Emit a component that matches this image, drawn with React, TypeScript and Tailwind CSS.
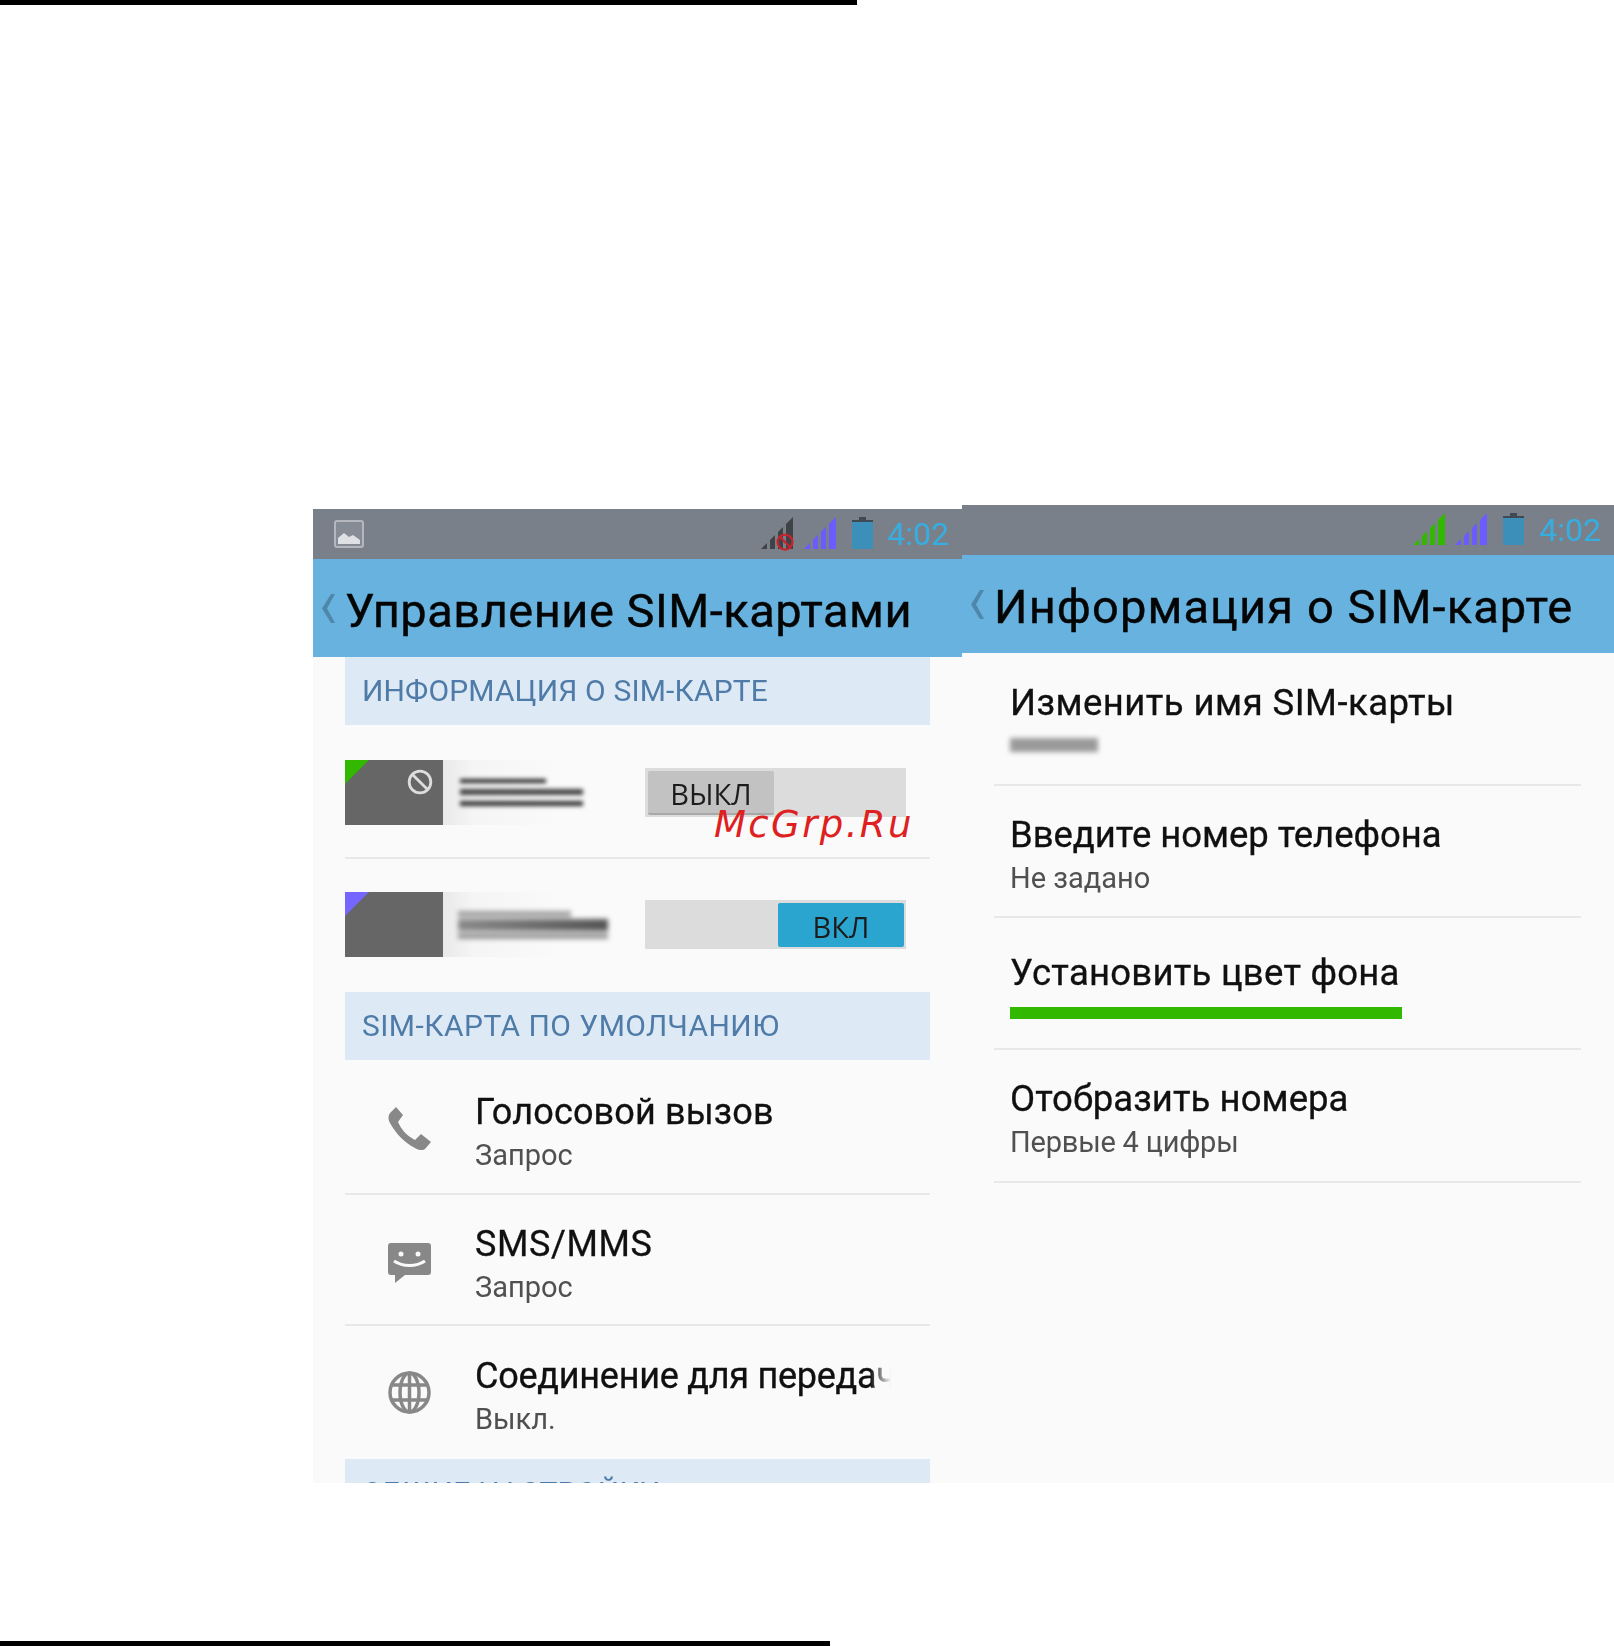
import React from 'react'

function Signal({ color, className }: { color: string; className: string }) {
  return (
    <svg viewBox="0 0 32 32" className={className} fill={color}>
      <polygon points="0,32 6,26 6,32" />
      <polygon points="9,23 14,18 14,32 9,32" />
      <polygon points="17,15 22,10 22,32 17,32" />
      <polygon points="25,7 32,0 32,32 25,32" />
    </svg>
  )
}

function Battery() {
  return (
    <svg viewBox="0 0 21 32" className="w-[21px] h-[32px]" fill="#3b8fb8">
      <path d="M7 0h7v3h7v29H0V3h7z" />
      <path d="M7 0h7v3h7v2H0V3h7z" fill="#3f4a55" />
    </svg>
  )
}

function NoSign({ className, color, width }: { className: string; color: string; width: number }) {
  return (
    <svg viewBox="0 0 24 24" className={className} fill="none" stroke={color} strokeWidth={width}>
      <circle cx="12" cy="12" r="10" />
      <path d="M5 5l14 14" />
    </svg>
  )
}

function Chevron() {
  return (
    <svg viewBox="0 0 13 29" className="w-[13px] h-[29px] shrink-0 blur-[0.6px]" fill="#4f87ab">
      <polygon points="9,0 13,0 5,14.5 13,29 9,29 0,14.5" />
    </svg>
  )
}

function StatusBar({ children }: { children?: React.ReactNode }) {
  return (
    <div className="h-[50px] bg-[#79808a] flex items-center pl-[21px] pr-[13px]">
      {children}
    </div>
  )
}

function ActionBar({ title, spacing }: { title: string; spacing: string }) {
  return (
    <div className="h-[98px] bg-[#67b2de] flex items-center pl-[9px] gap-[10px]">
      <Chevron />
      <span className={`text-[47px] leading-none mt-[4px] text-[#050505] whitespace-nowrap blur-[0.6px] [-webkit-text-stroke:0.4px_#050505] ${spacing}`}>{title}</span>
    </div>
  )
}

function SectionHeader({ label, spacing }: { label: string; spacing: string }) {
  return (
    <div className="h-[68px] bg-[#dde9f5] flex items-start pl-[17px] pt-[16px]">
      <span className={`text-[30px] leading-[36px] text-[#4f7ba8] whitespace-nowrap blur-[0.5px] ${spacing}`}>{label}</span>
    </div>
  )
}

function PhoneIcon() {
  return (
    <svg viewBox="0 0 43 43" className="w-[43px] h-[43px] blur-[0.5px]" fill="#888888">
      <path d="M8 0 15 8 10 15C13 22 19 29 27 33L33 27 43 35 37 42C34 44 30 43 27 41 17 36 8 27 2 16 0 12 0 9 2 6z" />
    </svg>
  )
}

function SmsIcon() {
  return (
    <svg viewBox="0 0 43 40" className="w-[43px] h-[40px] blur-[0.5px]">
      <path d="M3 0h37a3 3 0 0 1 3 3v26a3 3 0 0 1-3 3H17l-10 8v-8H3a3 3 0 0 1-3-3V3a3 3 0 0 1 3-3z" fill="#888888" />
      <circle cx="13" cy="11" r="2.5" fill="#fafafa" />
      <circle cx="30" cy="11" r="2.5" fill="#fafafa" />
      <path d="M6 18c9 6 22 6 31 0" fill="none" stroke="#fafafa" strokeWidth="3" />
    </svg>
  )
}

function GlobeIcon() {
  return (
    <svg viewBox="0 0 43 43" className="w-[43px] h-[43px] blur-[0.6px]" fill="none" stroke="#888888" strokeWidth="3.5">
      <circle cx="21.5" cy="21.5" r="19.5" />
      <ellipse cx="21.5" cy="21.5" rx="9.5" ry="19.5" />
      <path d="M21.5 2v39M4 14h35M4 29h35" />
    </svg>
  )
}

function SimRow({ corner, blocked, name, on, rowClass }: { corner: string; blocked?: boolean; name: React.ReactNode; on?: boolean; rowClass: string }) {
  return (
    <div className={`flex items-center pr-[24px] ${rowClass}`}>
      <div className="relative w-[98px] h-[65px] bg-[#666666] shrink-0">
        <svg viewBox="0 0 24 24" className="absolute left-0 top-0 w-[24px] h-[24px]" fill={corner}>
          <polygon points="0,0 24,0 0,24" />
        </svg>
        {blocked && <NoSign className="absolute left-[62px] top-[9px] w-[26px] h-[26px] blur-[0.3px]" color="#dddddd" width={2.6} />}
      </div>
      <div className="w-[202px] h-[65px] flex items-center bg-gradient-to-r from-[#e9e9e9] via-[#f5f5f5] via-15% to-transparent to-60% shrink-0">
        {name}
      </div>
      <div className={`w-[261px] h-[49px] bg-[#dcdcdc] flex items-center ${on ? 'justify-end pr-[2px]' : 'justify-start pl-[3px]'}`}>
        <div className={`w-[126px] h-[44px] rounded-[2px] flex items-center justify-center pt-[4px] font-['Open_Sans',sans-serif] text-[29px] text-[#1c1c1c] blur-[0.4px] ${on ? 'bg-[#2aa5d0]' : 'bg-[#c2c2c2] border-b-2 border-[#a8a8a8]'}`}>
          {on ? 'ВКЛ' : 'ВЫКЛ'}
        </div>
      </div>
    </div>
  )
}

function IconRow({ icon, title, sub, rowClass, textClass, spacing }: { icon: React.ReactNode; title: string; sub: string; rowClass: string; textClass: string; spacing: string }) {
  return (
    <div className={`flex items-center ${rowClass}`}>
      <div className="w-[130px] shrink-0 flex justify-center pr-[1px]">{icon}</div>
      <div className={`flex flex-col min-w-0 w-[416px] ${textClass}`}>
        <span className={`text-[36px] leading-[44px] text-[#101010] whitespace-nowrap overflow-hidden blur-[0.5px] [-webkit-text-stroke:0.3px_#101010] [mask-image:linear-gradient(to_right,black_95%,transparent)] ${spacing}`}>{title}</span>
        <span className="text-[29px] leading-[36px] mt-[3px] text-[#505050] blur-[0.5px]">{sub}</span>
      </div>
    </div>
  )
}

function InfoRow({ title, rowClass, spacing, children }: { title: string; rowClass: string; spacing: string; children: React.ReactNode }) {
  return (
    <div className={`pl-[16px] border-b-2 border-[#e8e8e8] ${rowClass}`}>
      <div className={`text-[36.5px] leading-[44px] text-[#101010] whitespace-nowrap blur-[0.5px] [-webkit-text-stroke:0.3px_#101010] ${spacing}`}>{title}</div>
      {children}
    </div>
  )
}

export default function App() {
  return (
    <div className="relative h-[1646px] bg-white flex flex-col justify-between overflow-hidden font-['Roboto',sans-serif]">
      <div className="h-[5px] w-[857px] bg-black" />

      <div className="flex items-start pl-[313px] flex-1">
        {/* left phone screen */}
        <div className="w-[649px] h-[974px] mt-[504px] bg-[#fafafa] overflow-hidden">
          <StatusBar>
            <svg viewBox="0 0 30 28" className="w-[30px] h-[28px] blur-[0.5px]">
              <rect x="1" y="1" width="28" height="26" rx="2" fill="#868c96" stroke="#b4b7bd" strokeWidth="2" />
              <path d="M4 24v-6l6-5 5 4 4-2 7 5v4z" fill="#dfe0e3" />
            </svg>
            <div className="ml-auto flex items-center">
              <div className="relative w-[32px] h-[32px] mb-[3px]">
                <Signal color="#3f4247" className="w-[32px] h-[32px] blur-[0.5px]" />
                <NoSign className="absolute left-[15px] top-[16px] w-[18px] h-[18px]" color="#c8242c" width={3} />
              </div>
              <Signal color="#6a5cff" className="w-[32px] h-[32px] ml-[11px] mb-[3px] blur-[0.5px]" />
              <div className="ml-[16px] mb-[2px] blur-[0.5px] flex"><Battery /></div>
              <span className="ml-[14px] text-[32px] leading-none text-[#35aee2] blur-[0.5px]">4:02</span>
            </div>
          </StatusBar>
          <ActionBar title="Управление SIM-картами" spacing="tracking-[0.5px]" />
          <div className="mx-[32px] w-[585px]">
            <SectionHeader label="ИНФОРМАЦИЯ О SIM-КАРТЕ" spacing="tracking-[0.15px]" />
            <SimRow
              corner="#33b800"
              blocked
              rowClass="h-[134px] pt-[3px] border-b-2 border-[#e8e8e8]"
              name={
                <div className="ml-[17px] w-[123px] flex flex-col gap-[6px] blur-[2px]">
                  <div className="h-[4px] w-[70%] bg-[#222222]" />
                  <div className="h-[6px] bg-[#444444]" />
                  <div className="h-[5px] bg-[#333333]" />
                </div>
              }
            />
            <SimRow
              corner="#7566ff"
              on
              rowClass="h-[133px] pb-[2px]"
              name={
                <div className="ml-[15px] w-[150px] flex flex-col gap-[2px] blur-[2.5px]">
                  <div className="h-[6px] w-[75%] bg-[#a0a0a0]" />
                  <div className="h-[12px] bg-gradient-to-r from-[#8a8a8a] to-[#555555]" />
                  <div className="h-[6px] bg-[#9a9a9a]" />
                </div>
              }
            />
            <SectionHeader label="SIM-КАРТА ПО УМОЛЧАНИЮ" spacing="tracking-[0.45px]" />
            <IconRow icon={<PhoneIcon />} title="Голосовой вызов" sub="Запрос" spacing="tracking-[0.15px]" rowClass="h-[135px] pt-[4px] border-b-2 border-[#e8e8e8]" textClass="mt-[6px]" />
            <IconRow icon={<SmsIcon />} title="SMS/MMS" sub="Запрос" spacing="tracking-[0.6px]" rowClass="h-[131px] pt-[7px] border-b-2 border-[#e8e8e8]" textClass="mt-0" />
            <IconRow icon={<GlobeIcon />} title="Соединение для передачи данных" sub="Выкл." spacing="tracking-[-0.25px]" rowClass="h-[133px]" textClass="mt-[6px]" />
            <SectionHeader label="ОБЩИЕ НАСТРОЙКИ" spacing="tracking-[0.3px]" />
          </div>
        </div>

        {/* right phone screen */}
        <div className="w-[652px] h-[978px] mt-[500px] bg-[#fafafa] overflow-hidden">
          <StatusBar>
            <div className="ml-auto flex items-center">
              <Signal color="#33b800" className="w-[32px] h-[32px] mb-[3px] blur-[0.4px]" />
              <Signal color="#6a5cff" className="w-[32px] h-[32px] ml-[10px] mb-[3px] blur-[0.5px]" />
              <div className="ml-[16px] mb-[2px] blur-[0.5px] flex"><Battery /></div>
              <span className="ml-[15px] text-[32px] leading-none text-[#35aee2] blur-[0.5px]">4:02</span>
            </div>
          </StatusBar>
          <ActionBar title="Информация о SIM-карте" spacing="tracking-[1.1px]" />
          <div className="ml-[32px] w-[587px]">
            <InfoRow title="Изменить имя SIM-карты" spacing="tracking-[0.45px]" rowClass="h-[133px] pt-[28px]">
              <div className="mt-[13px] w-[88px] h-[14px] bg-[#9a9a9a] blur-[2.5px]" />
            </InfoRow>
            <InfoRow title="Введите номер телефона" spacing="tracking-[-0.05px]" rowClass="h-[132px] pt-[27px]">
              <div className="text-[29px] leading-[36px] mt-[3px] text-[#505050] blur-[0.5px]">Не задано</div>
            </InfoRow>
            <InfoRow title="Установить цвет фона" spacing="tracking-[0.25px]" rowClass="h-[132px] pt-[33px]">
              <div className="mt-[12px] h-[12px] w-[392px] bg-[#33b800]" />
            </InfoRow>
            <InfoRow title="Отобразить номера" spacing="tracking-[0.05px]" rowClass="h-[133px] pt-[27px]">
              <div className="text-[29px] leading-[36px] mt-[3px] tracking-[-0.2px] text-[#505050] blur-[0.5px]">Первые 4 цифры</div>
            </InfoRow>
          </div>
        </div>
      </div>

      <div className="h-[5px] w-[830px] bg-black" />

      {/* site watermark stamped over the page */}
      <span className="absolute left-[714px] top-[804px] font-['DejaVu_Sans',sans-serif] italic text-[37px] leading-[42px] tracking-[2.4px] text-[#de2020]">McGrp.Ru</span>
    </div>
  )
}
